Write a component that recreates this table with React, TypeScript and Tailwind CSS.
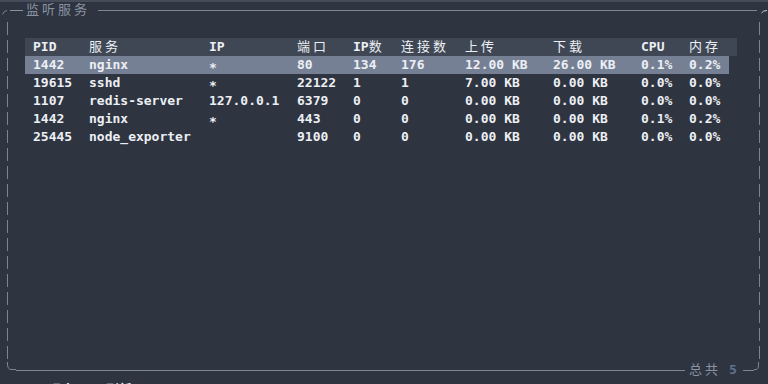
const widths = [56, 120, 88, 56, 48, 64, 88, 88, 48, 48];

const header = ["PID", "服务", "IP", "端口", "IP数", "连接数", "上传", "下载", "CPU", "内存"];

const rows: string[][] = [
  ["1442", "nginx", "*", "80", "134", "176", "12.00 KB", "26.00 KB", "0.1%", "0.2%"],
  ["19615", "sshd", "*", "22122", "1", "1", "7.00 KB", "0.00 KB", "0.0%", "0.0%"],
  ["1107", "redis-server", "127.0.0.1", "6379", "0", "0", "0.00 KB", "0.00 KB", "0.0%", "0.0%"],
  ["1442", "nginx", "*", "443", "0", "0", "0.00 KB", "0.00 KB", "0.1%", "0.2%"],
  ["25445", "node_exporter", "", "9100", "0", "0", "0.00 KB", "0.00 KB", "0.0%", "0.0%"],
];

const dashed =
  "w-px bg-[repeating-linear-gradient(to_bottom,transparent_0px,transparent_4px,#7d8595_4px,#7d8595_17px,transparent_17px,transparent_18px)]";

// CJK glyphs take two terminal cells, so space them out; latin stays tight
function Term({ text }: { text: string }) {
  const parts = text.split(/([\u4e00-\u9fff]+)/).filter(Boolean);
  return (
    <>
      {parts.map((p, i) =>
        /[\u4e00-\u9fff]/.test(p) ? (
          <span key={i} className="font-normal tracking-[3px]">
            {p}
          </span>
        ) : (
          <span key={i}>{p}</span>
        ),
      )}
    </>
  );
}

function Cell({ text, w }: { text: string; w: number }) {
  return (
    <div style={{ width: w }} className="shrink-0 whitespace-pre">
      {text === "*" ? (
        <span className="inline-block translate-y-[3px]">*</span>
      ) : (
        <Term text={text} />
      )}
    </div>
  );
}

function Row({ cells, className }: { cells: string[]; className: string }) {
  return (
    <div className={`flex h-[18px] items-center pl-[8px] ${className}`}>
      {cells.map((c, i) => (
        <Cell key={i} text={c} w={widths[i]} />
      ))}
    </div>
  );
}

export default function App() {
  return (
    <div className="flex h-[384px] w-[768px] flex-col overflow-hidden bg-[#2e3440] font-['DejaVu_Sans_Mono','Noto_Sans_CJK_SC',monospace] text-[13px] font-bold text-[#eceff4]">
      <div className="h-[2px] shrink-0 bg-[#454d5b]" />

      {/* title bar of the panel */}
      <div className="flex h-[16px] shrink-0 items-center">
        <svg width="10" height="16" className="shrink-0">
          <path d="M2.5 12.5 Q4 8.5 7 8.5" stroke="#7d8595" fill="none" strokeWidth="1" />
        </svg>
        <div className="h-px w-[13px] shrink-0 bg-[#8a93a3]" />
        <div className="ml-[3px] w-[72px] shrink-0 font-normal tracking-[3px] text-[#8a93a3]">
          监听服务
        </div>
        <div className="h-px flex-1 bg-[#7d8595]" />
        <svg width="11" height="16" className="shrink-0">
          <path d="M4.5 11 Q6 8.5 10 8.5" stroke="#c9ced6" fill="none" strokeWidth="1" />
        </svg>
      </div>

      <div className="flex h-[344px] shrink-0">
        <div className={`ml-[7px] shrink-0 ${dashed}`} />
        <div className="flex-1 pl-[17px] pt-[20px]">
          <div className="w-[712px]">
            <Row cells={header} className="bg-[#3f4755]" />
            <Row cells={rows[0]} className="mr-[8px] bg-[#768094]" />
            {rows.slice(1).map((r, i) => (
              <Row key={i} cells={r} className="" />
            ))}
          </div>
        </div>
        <div className={`mr-[8px] shrink-0 ${dashed}`} />
      </div>

      {/* footer line with count */}
      <div className="flex h-[16px] shrink-0 items-center">
        <svg width="10" height="16" className="ml-[6px] shrink-0">
          <path d="M1.5 0 L1.5 3 Q2 7.5 5 7.5 L10 7.5" stroke="#7d8595" fill="none" strokeWidth="1" />
        </svg>
        <div className="h-px flex-1 bg-[#7d8595]" />
        <div className="ml-[4px] w-[40px] shrink-0 font-normal tracking-[3px] text-[#8a93a3]">总共</div>
        <div className="w-[14px] shrink-0 text-[#5e7190]">5</div>
        <div className="h-px w-[11px] shrink-0 bg-[#7d8595]" />
        <svg width="10" height="16" className="mr-[4px] shrink-0">
          <path d="M0 7.5 L2 7.5 Q4.5 7.5 4.5 3 L4.5 0" stroke="#7d8595" fill="none" strokeWidth="1" />
        </svg>
      </div>

      <div className="h-[18px] shrink-0 whitespace-pre pl-[25px] pt-[2px]">^q 退出  r 刷新</div>
    </div>
  );
}
